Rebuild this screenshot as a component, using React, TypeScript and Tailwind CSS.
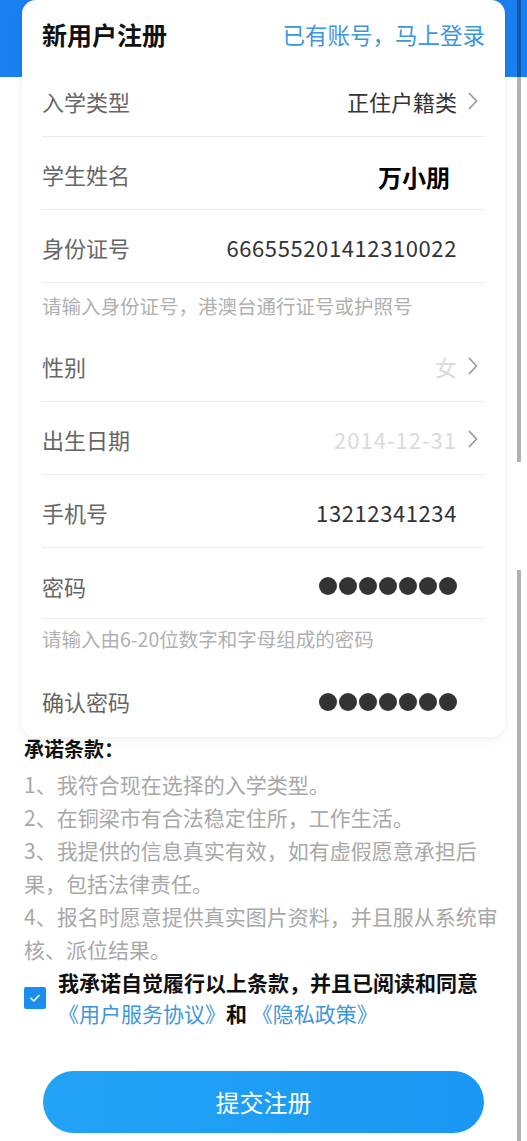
import clsx from 'clsx';

const Chevron = () => (
  <svg width="10" height="18" viewBox="0 0 10 18" fill="none">
    <path d="M1.5 1.5L8.5 9L1.5 16.5" stroke="#9a9a9a" strokeWidth="1.8" strokeLinecap="round" strokeLinejoin="round" />
  </svg>
);

const Dots = () => (
  <div className="flex gap-[2px]">
    {[0, 1, 2, 3, 4, 5, 6].map(i => (
      <span key={i} className="w-[18px] h-[18px] rounded-full bg-[#333]" />
    ))}
  </div>
);

const Row = ({ label, children, chevron, divider = true }: { label: string; children?: any; chevron?: boolean; divider?: boolean }) => (
  <div className={clsx('flex items-center h-[73px] pt-[2px]', divider && 'border-b border-[#ececec]')}>
    <span className="text-[22px] text-[#666] shrink-0">{label}</span>
    <div className="flex-1 flex justify-end items-center">{children}</div>
    <div className="w-[28px] flex justify-end pr-[7px]">{chevron && <Chevron />}</div>
  </div>
);

const terms = [
  '1、我符合现在选择的入学类型。',
  '2、在铜梁市有合法稳定住所，工作生活。',
  '3、我提供的信息真实有效，如有虚假愿意承担后果，包括法律责任。',
  '4、报名时愿意提供真实图片资料，并且服从系统审核、派位结果。',
];

export default function App() {
  return (
    <div className="relative min-h-[1141px] bg-[linear-gradient(to_bottom,#1a7ff0_77px,#ffffff_77px)] font-['Noto_Sans_CJK_SC',sans-serif] pb-[6px]">
      {/* form card */}
      <div className="mx-[22px] bg-white rounded-[14px] shadow-[0_2px_10px_rgba(0,0,0,0.07)] px-[20px]">
        <div className="flex items-center justify-between h-[64px] pt-[6px]">
          <h1 className="text-[25px] font-bold text-[#111]">新用户注册</h1>
          <a className="text-[22.5px] text-[#3d96dc]">已有账号，马上登录</a>
        </div>

        <Row label="入学类型" chevron>
          <span className="text-[22px] text-[#333]">正住户籍类</span>
        </Row>
        <Row label="学生姓名">
          <span className="text-[24px] font-bold text-black mr-[7px] mt-[6px]">万小朋</span>
        </Row>
        <Row label="身份证号">
          <span className="text-[22px] text-[#333] tracking-[0.6px]">666555201412310022</span>
        </Row>
        <div className="h-[46px] pt-[11px] text-[19.5px] leading-[24px] text-[#b0b0b0]">
          请输入身份证号，港澳台通行证号或护照号
        </div>
        <Row label="性别" chevron>
          <span className="text-[22px] text-[#dadada]">女</span>
        </Row>
        <Row label="出生日期" chevron>
          <span className="text-[22px] text-[#dadada] tracking-[1px]">2014-12-31</span>
        </Row>
        <Row label="手机号">
          <span className="text-[22px] text-[#333] tracking-[0.6px]">13212341234</span>
        </Row>
        <div className="flex items-center h-[71px] pt-[6px] border-b border-[#ececec]">
          <span className="text-[22px] text-[#666] shrink-0">密码</span>
          <div className="flex-1 flex justify-end items-center pr-[28px]">
            <Dots />
          </div>
        </div>
        <div className="h-[45px] pt-[8px] text-[19.5px] leading-[24px] text-[#b0b0b0]">
          请输入由6-20位数字和字母组成的密码
        </div>
        <Row label="确认密码" divider={false}>
          <Dots />
        </Row>
      </div>

      {/* terms */}
      <div className="px-[24px] -mt-[2px]">
        <h2 className="text-[20px] leading-[28px] font-bold text-[#111]">承诺条款：</h2>
        <div className="mt-[5px] text-[21px] leading-[33px] text-[#a8a8a8]">
          {terms.map(t => (
            <p key={t}>{t}</p>
          ))}
        </div>

        <label className="mt-[1px] flex items-center gap-[12px]">
          <span className="w-[22px] h-[22px] shrink-0 rounded-[2px] bg-[#1a8ff0] flex items-center justify-center">
            <svg width="14" height="14" viewBox="0 0 14 14" fill="none">
              <path d="M3 7.2L5.8 10L11 4.5" stroke="#fff" strokeWidth="1.6" strokeLinecap="round" strokeLinejoin="round" />
            </svg>
          </span>
          <span className="text-[21px] leading-[31px] font-bold text-[#111]">
            我承诺自觉履行以上条款，并且已阅读和同意
            <br />
            <a className="font-normal text-[#3d96dc]">《用户服务协议》</a>和 <a className="font-normal text-[#3d96dc]">《隐私政策》</a>
          </span>
        </label>
      </div>

      <div className="px-[43px] mt-[42px]">
        <button className="w-full h-[62px] rounded-full bg-[linear-gradient(to_right,#22a3f6,#1a97f3)] text-white text-[24px]">
          提交注册
        </button>
      </div>

      {/* scroll indicator */}
      <div className="absolute right-[6px] top-0 h-[462px] w-[4px] bg-black/30" />
      <div className="absolute right-[6px] top-[570px] bottom-0 w-[4px] bg-black/30" />
    </div>
  );
}
